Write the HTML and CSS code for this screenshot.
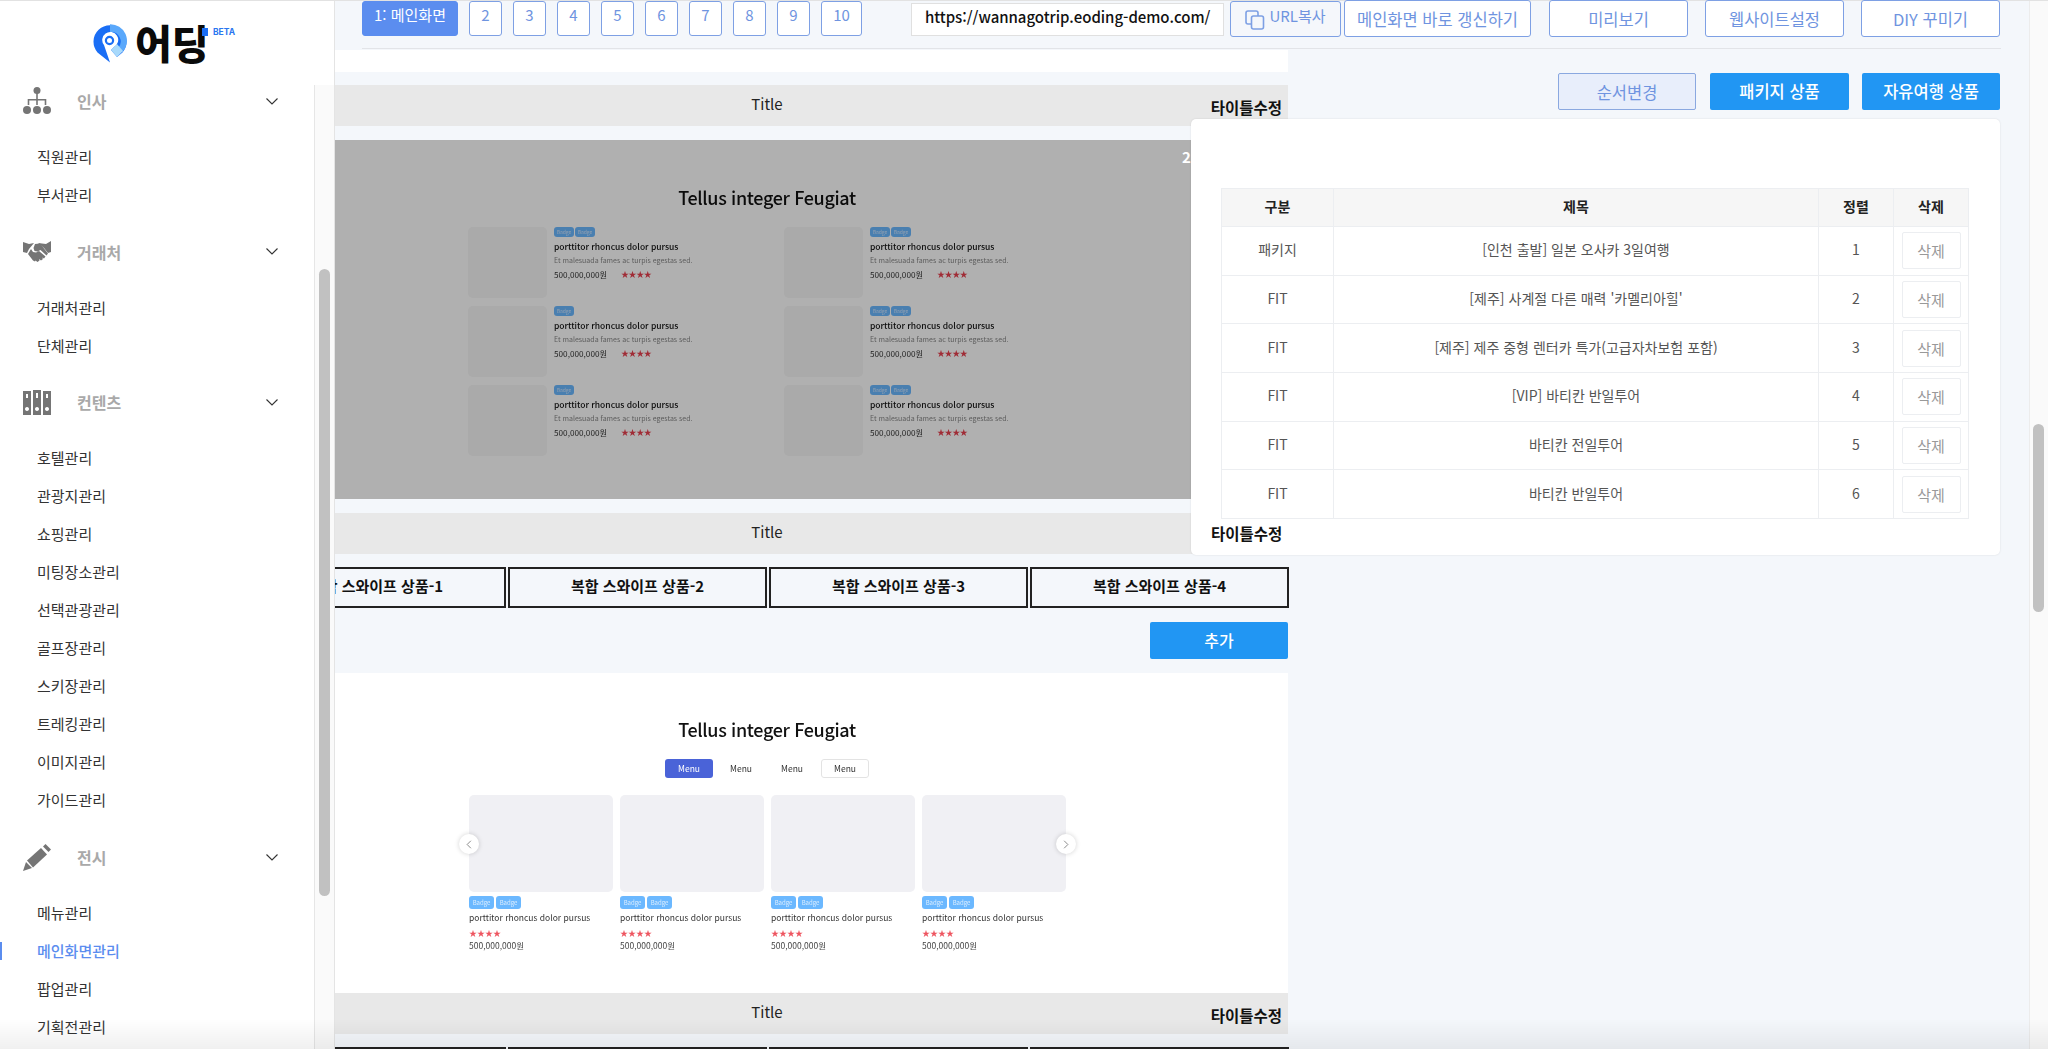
FILE: index.html
```html
<!DOCTYPE html>
<html lang="ko">
<head>
<meta charset="utf-8">
<title>메인화면관리</title>
<link rel="stylesheet" href="styles.css">
</head>
<body>
<div class="app">
  <aside class="sidebar">
    <div class="logo">
      <svg class="logo-pin" width="34" height="39" viewBox="0 0 34 39">
        <path d="M17 38.5 L4.5 28.5 A16.5 16.5 0 1 1 29.5 28.5 L24 33 L18 26 L21 23 A8 8 0 1 0 11 21 Z" fill="#1a6ef5"/>
        <path d="M17 .2 A16.5 16.5 0 0 1 29.5 28 L25 24 A9.5 9.5 0 0 0 17 8 Z" fill="#5aa8fb"/>
        <path d="M18 26 L24 20 L30 27 L24 33 Z" fill="#a8d9fb"/>
        <circle cx="16.5" cy="16.5" r="3.6" fill="none" stroke="#1a6ef5" stroke-width="2.2"/>
      </svg>
      <span class="logo-word">어딩</span>
      <i class="logo-bar"></i>
      <span class="logo-beta">BETA</span>
    </div>
    <div class="side-body">
      <nav class="side-nav">
        <section class="group">
          <div class="group-head">
            <svg class="group-icon" viewBox="0 0 28 28"><circle cx="14" cy="3.5" r="3.5"/><path d="M13.2 6h1.6v6h8.5v6h-1.6v-4.4h-6.9V18h-1.6v-4.4H6.3V18H4.7v-6h8.5z"/><circle cx="4" cy="23" r="4"/><circle cx="14" cy="23" r="4"/><circle cx="24" cy="23" r="4"/></svg>
            <span class="group-name">인사</span>
            <svg class="chev" viewBox="0 0 12 7"><path d="M.5.5 6 6 11.500 .5"/></svg>
          </div>
          <a class="item">직원관리</a>
          <a class="item">부서관리</a>
        </section>
        <section class="group">
          <div class="group-head">
            <svg class="group-icon" viewBox="0 0 28 22"><path d="M0 1l6 2 5-1-5 6-2 4-4-1z"/><path d="M28 0v11l-3 1-4-5-6-5 4 .5 4 .5z"/><path d="M12 3l5-.5 8 10-1.500 2-6-5.500-3 1.500-3-.5-1-3zM5 13l3-5 2 3 3 .5 3-1.500 6.500 5.500-1.500 2-2-1 1 1.500-2 1.500-2-1.500.5 1.500-2 1.500-2-1.500-.5 1-2-1z"/></svg>
            <span class="group-name">거래처</span>
            <svg class="chev" viewBox="0 0 12 7"><path d="M.5.5 6 6 11.500 .5"/></svg>
          </div>
          <a class="item">거래처관리</a>
          <a class="item">단체관리</a>
        </section>
        <section class="group">
          <div class="group-head">
            <svg class="group-icon" viewBox="0 0 28 25"><path fill-rule="evenodd" d="M0 1h8v24H0zM3 4v4h2V4zM4 17a2 2 0 1 0 .01 0zM10 0h8v25h-8zM13 3v5h2V3zM14 17a2 2 0 1 0 .01 0zM20 1h8v24h-8zM23 4v4h2V4zM24 17a2 2 0 1 0 .01 0z"/></svg>
            <span class="group-name">컨텐츠</span>
            <svg class="chev" viewBox="0 0 12 7"><path d="M.5.5 6 6 11.500 .5"/></svg>
          </div>
          <a class="item">호텔관리</a>
          <a class="item">관광지관리</a>
          <a class="item">쇼핑관리</a>
          <a class="item">미팅장소관리</a>
          <a class="item">선택관광관리</a>
          <a class="item">골프장관리</a>
          <a class="item">스키장관리</a>
          <a class="item">트레킹관리</a>
          <a class="item">이미지관리</a>
          <a class="item">가이드관리</a>
        </section>
        <section class="group">
          <div class="group-head">
            <svg class="group-icon" viewBox="0 0 28 27"><path d="M0 27l3-9 6 6z"/><path d="M4 16.500 18 4l6 6.500-14 13z"/><path d="M20 2.500 22.500 0 28 5.500 25.500 8z"/></svg>
            <span class="group-name">전시</span>
            <svg class="chev" viewBox="0 0 12 7"><path d="M.5.5 6 6 11.500 .5"/></svg>
          </div>
          <a class="item">메뉴관리</a>
          <a class="item active">메인화면관리</a>
          <a class="item">팝업관리</a>
          <a class="item">기획전관리</a>
        </section>
      </nav>
      <div class="side-track"><i class="side-thumb"></i></div>
    </div>
  </aside>

  <main class="main">
    <header class="topbar">
      <div class="tabs">
        <a class="tab current">1: 메인화면</a>
        <a class="tab">2</a><a class="tab">3</a><a class="tab">4</a><a class="tab">5</a><a class="tab">6</a><a class="tab">7</a><a class="tab">8</a><a class="tab">9</a><a class="tab wide">10</a>
      </div>
      <div class="url">https://wannagotrip.eoding-demo.com/</div>
      <a class="tool copy">
        <svg width="20" height="20" viewBox="0 0 20 20"><rect x="1" y="1" width="12" height="13" rx="2"/><rect x="6.500" y="6" width="12" height="13" rx="2" fill="#f5f7fb"/></svg>
        URL복사
      </a>
      <a class="tool w-refresh">메인화면 바로 갱신하기</a>
      <a class="tool w-std m-a">미리보기</a>
      <a class="tool w-std m-b">웹사이트설정</a>
      <a class="tool w-std m-b">DIY 꾸미기</a>
    </header>

    <div class="canvas">
      <div class="left-col">
        <div class="strip"></div>

        <div class="title-bar"><span class="t-center">Title</span><b class="t-edit">타이틀수정</b></div>

        <div class="preview dark">
          <h3 class="pv-title">Tellus integer Feugiat</h3>
          <div class="pv-grid">
            <article class="pv-card"><div class="thumb"></div><div><p class="badges"><i>Badge</i><i>Badge</i></p><h4>porttitor rhoncus dolor pursus</h4><p class="desc">Et malesuada fames ac turpis egestas sed.</p><p class="meta"><span>500,000,000원</span><em>★★★★</em></p></div></article>
            <article class="pv-card"><div class="thumb"></div><div><p class="badges"><i>Badge</i><i>Badge</i></p><h4>porttitor rhoncus dolor pursus</h4><p class="desc">Et malesuada fames ac turpis egestas sed.</p><p class="meta"><span>500,000,000원</span><em>★★★★</em></p></div></article>
            <article class="pv-card"><div class="thumb"></div><div><p class="badges"><i>Badge</i></p><h4>porttitor rhoncus dolor pursus</h4><p class="desc">Et malesuada fames ac turpis egestas sed.</p><p class="meta"><span>500,000,000원</span><em>★★★★</em></p></div></article>
            <article class="pv-card"><div class="thumb"></div><div><p class="badges"><i>Badge</i><i>Badge</i></p><h4>porttitor rhoncus dolor pursus</h4><p class="desc">Et malesuada fames ac turpis egestas sed.</p><p class="meta"><span>500,000,000원</span><em>★★★★</em></p></div></article>
            <article class="pv-card"><div class="thumb"></div><div><p class="badges"><i>Badge</i></p><h4>porttitor rhoncus dolor pursus</h4><p class="desc">Et malesuada fames ac turpis egestas sed.</p><p class="meta"><span>500,000,000원</span><em>★★★★</em></p></div></article>
            <article class="pv-card"><div class="thumb"></div><div><p class="badges"><i>Badge</i><i>Badge</i></p><h4>porttitor rhoncus dolor pursus</h4><p class="desc">Et malesuada fames ac turpis egestas sed.</p><p class="meta"><span>500,000,000원</span><em>★★★★</em></p></div></article>
          </div>
          <span class="pv-num">2</span>
        </div>

        <div class="title-bar"><span class="t-center">Title</span></div>

        <div class="swipe-row">
          <div class="swipe">복합 스와이프 상품-1</div>
          <div class="swipe">복합 스와이프 상품-2</div>
          <div class="swipe">복합 스와이프 상품-3</div>
          <div class="swipe">복합 스와이프 상품-4</div>
        </div>

        <div class="add-row"><a class="add">추가</a></div>

        <div class="preview light">
          <h3 class="pv-title">Tellus integer Feugiat</h3>
          <div class="pv-tabs"><span class="on">Menu</span><span>Menu</span><span>Menu</span><span class="box">Menu</span></div>
          <div class="car">
            <article class="car-card"><div class="car-img"></div><p class="badges"><i>Badge</i><i>Badge</i></p><h4>porttitor rhoncus dolor pursus</h4><em>★★★★</em><span>500,000,000원</span></article>
            <article class="car-card"><div class="car-img"></div><p class="badges"><i>Badge</i><i>Badge</i></p><h4>porttitor rhoncus dolor pursus</h4><em>★★★★</em><span>500,000,000원</span></article>
            <article class="car-card"><div class="car-img"></div><p class="badges"><i>Badge</i><i>Badge</i></p><h4>porttitor rhoncus dolor pursus</h4><em>★★★★</em><span>500,000,000원</span></article>
            <article class="car-card"><div class="car-img"></div><p class="badges"><i>Badge</i><i>Badge</i></p><h4>porttitor rhoncus dolor pursus</h4><em>★★★★</em><span>500,000,000원</span></article>
            <span class="arrow prev"><svg viewBox="0 0 8 12"><path d="M6.500 1 1.500 6l5 5"/></svg></span>
            <span class="arrow next"><svg viewBox="0 0 8 12"><path d="M1.500 1l5 5-5 5"/></svg></span>
          </div>
        </div>

        <div class="title-bar"><span class="t-center">Title</span><b class="t-edit">타이틀수정</b></div>

        <div class="swipe-row">
          <div class="swipe"></div><div class="swipe"></div><div class="swipe"></div><div class="swipe"></div>
        </div>
      </div>

      <div class="overlay">
        <div class="action-row">
          <a class="act ghost">순서변경</a>
          <a class="act solid">패키지 상품</a>
          <a class="act solid last">자유여행 상품</a>
        </div>
        <section class="panel">
          <table class="grid">
            <colgroup><col class="c1"><col class="c2"><col class="c3"><col class="c4"></colgroup>
            <thead><tr><th>구분</th><th>제목</th><th>정렬</th><th>삭제</th></tr></thead>
            <tbody>
              <tr><td>패키지</td><td>[인천 출발] 일본 오사카 3일여행</td><td>1</td><td class="del-cell"><a class="del">삭제</a></td></tr>
              <tr><td>FIT</td><td>[제주] 사계절 다른 매력 '카멜리아힐'</td><td>2</td><td class="del-cell"><a class="del">삭제</a></td></tr>
              <tr><td>FIT</td><td>[제주] 제주 중형 렌터카 특가(고급자차보험 포함)</td><td>3</td><td class="del-cell"><a class="del">삭제</a></td></tr>
              <tr><td>FIT</td><td>[VIP] 바티칸 반일투어</td><td>4</td><td class="del-cell"><a class="del">삭제</a></td></tr>
              <tr><td>FIT</td><td>바티칸 전일투어</td><td>5</td><td class="del-cell"><a class="del">삭제</a></td></tr>
              <tr><td>FIT</td><td>바티칸 반일투어</td><td>6</td><td class="del-cell"><a class="del">삭제</a></td></tr>
            </tbody>
          </table>
          <b class="panel-edit">타이틀수정</b>
        </section>
      </div>
    </div>
  </main>

  <div class="page-track"><i class="page-thumb"></i></div>
</div>
<div class="bottom-fade"></div>
</body>
</html>
```
FILE: styles.css
```css
* { box-sizing: border-box; }
html, body { margin: 0; height: 100%; overflow: hidden; }
body {
  font-family: "Noto Sans CJK KR", "Noto Sans", sans-serif;
  color: #222;
  background: #f4f7fb;
}
a { display: block; }
i, em { font-style: normal; }
p, h3, h4 { margin: 0; }

.app { display: flex; height: 1049px; border-top: 1px solid #e2e2e2; }

/* sidebar */
.sidebar {
  position: relative;
  z-index: 3;
  flex: 0 0 335px;
  background: #fff;
  border-right: 1px solid #e4e4e4;
  display: flex;
  flex-direction: column;
  height: 1048px;
}
.logo {
  position: relative;
  flex: 0 0 81px;
  padding: 23px 0 0 93px;
  display: flex;
  align-items: flex-start;
}
.logo-pin { flex: none; }
.logo-word {
  margin: -9px 0 0 8px;
  font-size: 40px;
  line-height: 54px;
  font-weight: 900;
  color: #0a0a0a;
  white-space: nowrap;
}
.logo-bar {
  position: absolute;
  left: 202px;
  top: 27px;
  width: 6px;
  height: 8px;
  background: #1a6ef5;
}
.logo-beta {
  position: absolute;
  left: 213px;
  top: 24px;
  font-family: "Inter", sans-serif;
  font-size: 8.5px;
  line-height: 14px;
  font-weight: 700;
  color: #2a77f0;
}
.side-body { flex: 1; display: flex; min-height: 0; }
.side-nav { flex: 1; overflow: hidden; padding-left: 23px; }
.group { margin-bottom: 18.7px; }
.group-head {
  height: 38px;
  display: flex;
  align-items: center;
  margin-bottom: 18px;
  padding-right: 36px;
}
.group-icon { width: 28px; fill: #757575; flex: none; }
.group-name {
  margin-left: 26px;
  font-size: 16px;
  font-weight: 700;
  color: #a9a9a9;
  flex: 1;
}
.chev { width: 12px; height: 7px; fill: none; stroke: #333; stroke-width: 1.1; flex: none; }
.item {
  position: relative;
  height: 38px;
  line-height: 38px;
  margin-left: 14px;
  font-size: 15px;
  color: #333;
}
.item.active { color: #5b8def; font-weight: 500; }
.item.active::before {
  content: "";
  position: absolute;
  left: -37px;
  top: 10px;
  width: 2px;
  height: 18px;
  background: #5b8def;
}
.side-track {
  flex: 0 0 20px;
  margin-top: 3px;
  background: #fafafa;
  border-left: 1px solid #e6e6e6;
  padding: 184px 4px 0 4px;
}
.side-thumb { display: block; height: 627px; background: #c1c1c1; border-radius: 6px; }

/* main */
.main { position: relative; flex: 1; min-width: 0; }
.topbar {
  margin-left: 27px;
  margin-right: 28px;
  height: 48px;
  border-bottom: 1px solid #e2e4e8;
  display: flex;
  align-items: flex-start;
  font-size: 15px;
}
.tabs { display: flex; gap: 11px; }
.tab {
  width: 33px;
  height: 35px;
  border: 1.5px solid #7ea0e4;
  border-radius: 3px;
  background: #fff;
  color: #6f94e0;
  text-align: center;
  line-height: 26px;
  font-size: 15px;
}
.tab.wide { width: 41px; }
.tab.current { width: 96px; background: #5b8def; border-color: #5b8def; color: #fff; }
.url {
  margin-left: 49px;
  margin-top: 2px;
  width: 313px;
  height: 33px;
  background: #fff;
  border: 1px solid #e0e0e0;
  padding-left: 13px;
  font-size: 15px;
  font-weight: 500;
  line-height: 25px;
  letter-spacing: -.04px;
  color: #111;
  white-space: nowrap;
}
.tool {
  height: 37px;
  margin-top: -1px;
  background: #fff;
  border: 1.5px solid #7ea0e4;
  border-radius: 3px;
  color: #6f94e0;
  font-size: 16.5px;
  line-height: 36px;
  text-align: center;
  white-space: nowrap;
}
.copy {
  margin-left: 6px;
  margin-top: 0;
  height: 36px;
  width: 111px;
  display: flex;
  align-items: flex-start;
  justify-content: center;
  gap: 4px;
  background: #f5f7fb;
  font-size: 15px;
  line-height: 27px;
}
.copy svg { margin-top: 8px; fill: none; stroke: #7ea0e4; stroke-width: 1.600; }
.w-refresh { width: 187px; margin-left: 3px; }
.w-std { width: 139px; }
.m-a { margin-left: 18px; }
.m-b { margin-left: 17px; }

.canvas { position: relative; height: 1000px; overflow: hidden; padding-top: 1px; }
.left-col { width: 1042px; margin-left: -89px; }
.strip { height: 22px; background: #fff; margin-bottom: 13px; }

.title-bar {
  position: relative;
  height: 41px;
  background: #e8e8e8;
  text-align: center;
  font-size: 15px;
  line-height: 38px;
  color: #222;
}
.t-edit {
  position: absolute;
  right: 6px;
  top: 11px;
  font-size: 15.5px;
  line-height: 22px;
  font-weight: 700;
  color: #111;
}

.preview { position: relative; overflow: hidden; background: #fff; }
.preview.dark { height: 359px; margin: 14px 0; }
.preview.dark::after { content: ""; position: absolute; inset: 0; background: rgba(0, 0, 0, .31); }
.preview.light { height: 320px; }
.pv-title {
  text-align: center;
  font-size: 18px;
  line-height: 28px;
  font-weight: 500;
  letter-spacing: -.35px;
  color: #111;
  filter: blur(.3px);
}
.dark .pv-title { padding-top: 43px; }
.pv-grid {
  margin: 16px 0 0 222px;
  display: grid;
  grid-template-columns: 316px 316px;
  row-gap: 8px;
  filter: blur(.5px);
}
.pv-card { display: flex; gap: 7px; height: 71px; }
.thumb { flex: 0 0 79px; background: #f6f6f6; border-radius: 5px; }
.badges { display: flex; gap: 1px; height: 10px; }
.badges i {
  display: block;
  width: 20px;
  height: 10px;
  border-radius: 3px;
  background: #6bb8ff;
  color: #cfe6ff;
  font-size: 5px;
  line-height: 10px;
  text-align: center;
}
.pv-card h4 { margin-top: 2px; font-size: 8.5px; line-height: 14px; font-weight: 500; color: #111; white-space: nowrap; }
.desc { margin-top: 1px; font-size: 7px; line-height: 13px; color: #888; white-space: nowrap; }
.meta { margin-top: 0; font-size: 8.2px; line-height: 14px; color: #333; display: flex; align-items: center; gap: 14px; white-space: nowrap; }
.meta em { color: #e8414f; font-size: 8px; letter-spacing: -.4px; }
.pv-num {
  position: absolute;
  z-index: 1;
  left: 936px;
  top: 6px;
  font-size: 15px;
  font-weight: 700;
  color: #fff;
}

.swipe-row { display: flex; gap: 2px; margin-top: 13px; padding-left: 1px; }
.swipe {
  flex: 0 0 259px;
  height: 41px;
  border: 2px solid #222;
  text-align: center;
  font-size: 15px;
  font-weight: 700;
  line-height: 34px;
  color: #111;
}
.add-row { display: flex; justify-content: flex-end; margin: 14px 0; }
.add {
  width: 138px;
  height: 37px;
  background: #2196f3;
  border-radius: 2px;
  color: #fff;
  font-size: 16px;
  font-weight: 500;
  text-align: center;
  line-height: 36px;
}

.light .pv-title { padding-top: 42px; }
.pv-tabs {
  margin: 16px 0 0 419px;
  display: flex;
  align-items: center;
  font-size: 8.5px;
  color: #333;
  height: 19px;
  filter: blur(.3px);
}
.pv-tabs span { width: 48px; margin-right: 3px; text-align: center; line-height: 19px; height: 19px; border-radius: 3px; }
.pv-tabs span.on { background: #4a63d8; color: #fff; margin-right: 4px; }
.pv-tabs span:nth-child(3) { margin-right: 5px; }
.pv-tabs span.box { border: 1px solid #e3e3e3; background: #fff; line-height: 17px; }
.car {
  position: relative;
  margin: 17px 0 0 223px;
  width: 597px;
  display: grid;
  grid-template-columns: repeat(4, 144px);
  column-gap: 7px;
}
.car-card { display: flex; flex-direction: column; filter: blur(.4px); }
.car-img { height: 97px; background: #f0f0f4; border-radius: 5px; }
.car-card .badges { margin-top: 4px; height: 13px; gap: 2px; }
.car-card .badges i { width: 25px; height: 13px; font-size: 6px; line-height: 13px; color: #d8ecff; }
.car-card h4 { margin-top: 1px; font-size: 8.5px; line-height: 14px; font-weight: 400; color: #333; white-space: nowrap; }
.car-card em { color: #ee5560; font-size: 8px; line-height: 11px; margin-top: 3px; }
.car-card span { margin-top: 2px; font-size: 8.5px; line-height: 11px; color: #444; }
.arrow {
  position: absolute;
  top: 39px;
  width: 20px;
  height: 20px;
  border-radius: 50%;
  background: #fff;
  box-shadow: 0 0 5px rgba(0, 0, 0, .18);
  display: flex;
  align-items: center;
  justify-content: center;
}
.arrow.prev { left: -10px; }
.arrow.next { right: -10px; }
.arrow svg { width: 6px; height: 9px; fill: none; stroke: #666; stroke-width: 1; }

/* right overlay */
.overlay { position: absolute; left: 856px; top: 24px; width: 809px; }
.action-row { display: flex; justify-content: flex-end; gap: 14px; margin-bottom: 9px; }
.act {
  width: 139px;
  height: 37px;
  border-radius: 2px;
  text-align: center;
  font-size: 16.5px;
  line-height: 37px;
}
.act.ghost { background: #e8eefb; border: 1.5px solid #8aa8e0; color: #6f94e0; width: 138px; }
.act.solid { background: #2196f3; color: #fff; font-weight: 500; }
.act.last { margin-left: -1px; width: 138px; }
.panel {
  height: 436px;
  background: #fff;
  border-radius: 5px;
  box-shadow: 0 0 2px rgba(0, 0, 0, .12);
  padding: 69px 31px 0 30px;
}
.grid { width: 747px; border-collapse: collapse; table-layout: fixed; font-size: 14px; color: #555; }
.grid .c1 { width: 112px; }
.grid .c2 { width: 485px; }
.grid .c3 { width: 75px; }
.grid .c4 { width: 75px; }
.grid th, .grid td { border: 1.5px solid #eceef1; text-align: center; padding: 0 0 3px; }
.grid th { height: 38px; background: #f6f6f6; font-weight: 700; color: #222; font-size: 14px; }
.grid td { height: 48.7px; }
.grid td.del-cell { padding: 0; }
.del {
  width: 59px;
  height: 37px;
  margin: 0 auto;
  border: 1.5px solid #eceef1;
  border-radius: 2px;
  color: #999;
  font-size: 15px;
  line-height: 36px;
}
.panel-edit { display: block; margin: 3px 0 0 -10px; font-size: 15.5px; font-weight: 700; line-height: 22px; color: #111; }

.page-track {
  flex: 0 0 19px;
  background: #fafafa;
  border-left: 1px solid #ececec;
  padding: 423px 4px 0 3px;
}
.page-thumb { display: block; height: 188px; background: #c1c1c1; border-radius: 6px; }

.bottom-fade {
  position: fixed;
  z-index: 5;
  left: 0;
  right: 0;
  bottom: 0;
  height: 30px;
  background: linear-gradient(rgba(0, 0, 0, 0), rgba(0, 0, 0, .06));
  pointer-events: none;
}
```
